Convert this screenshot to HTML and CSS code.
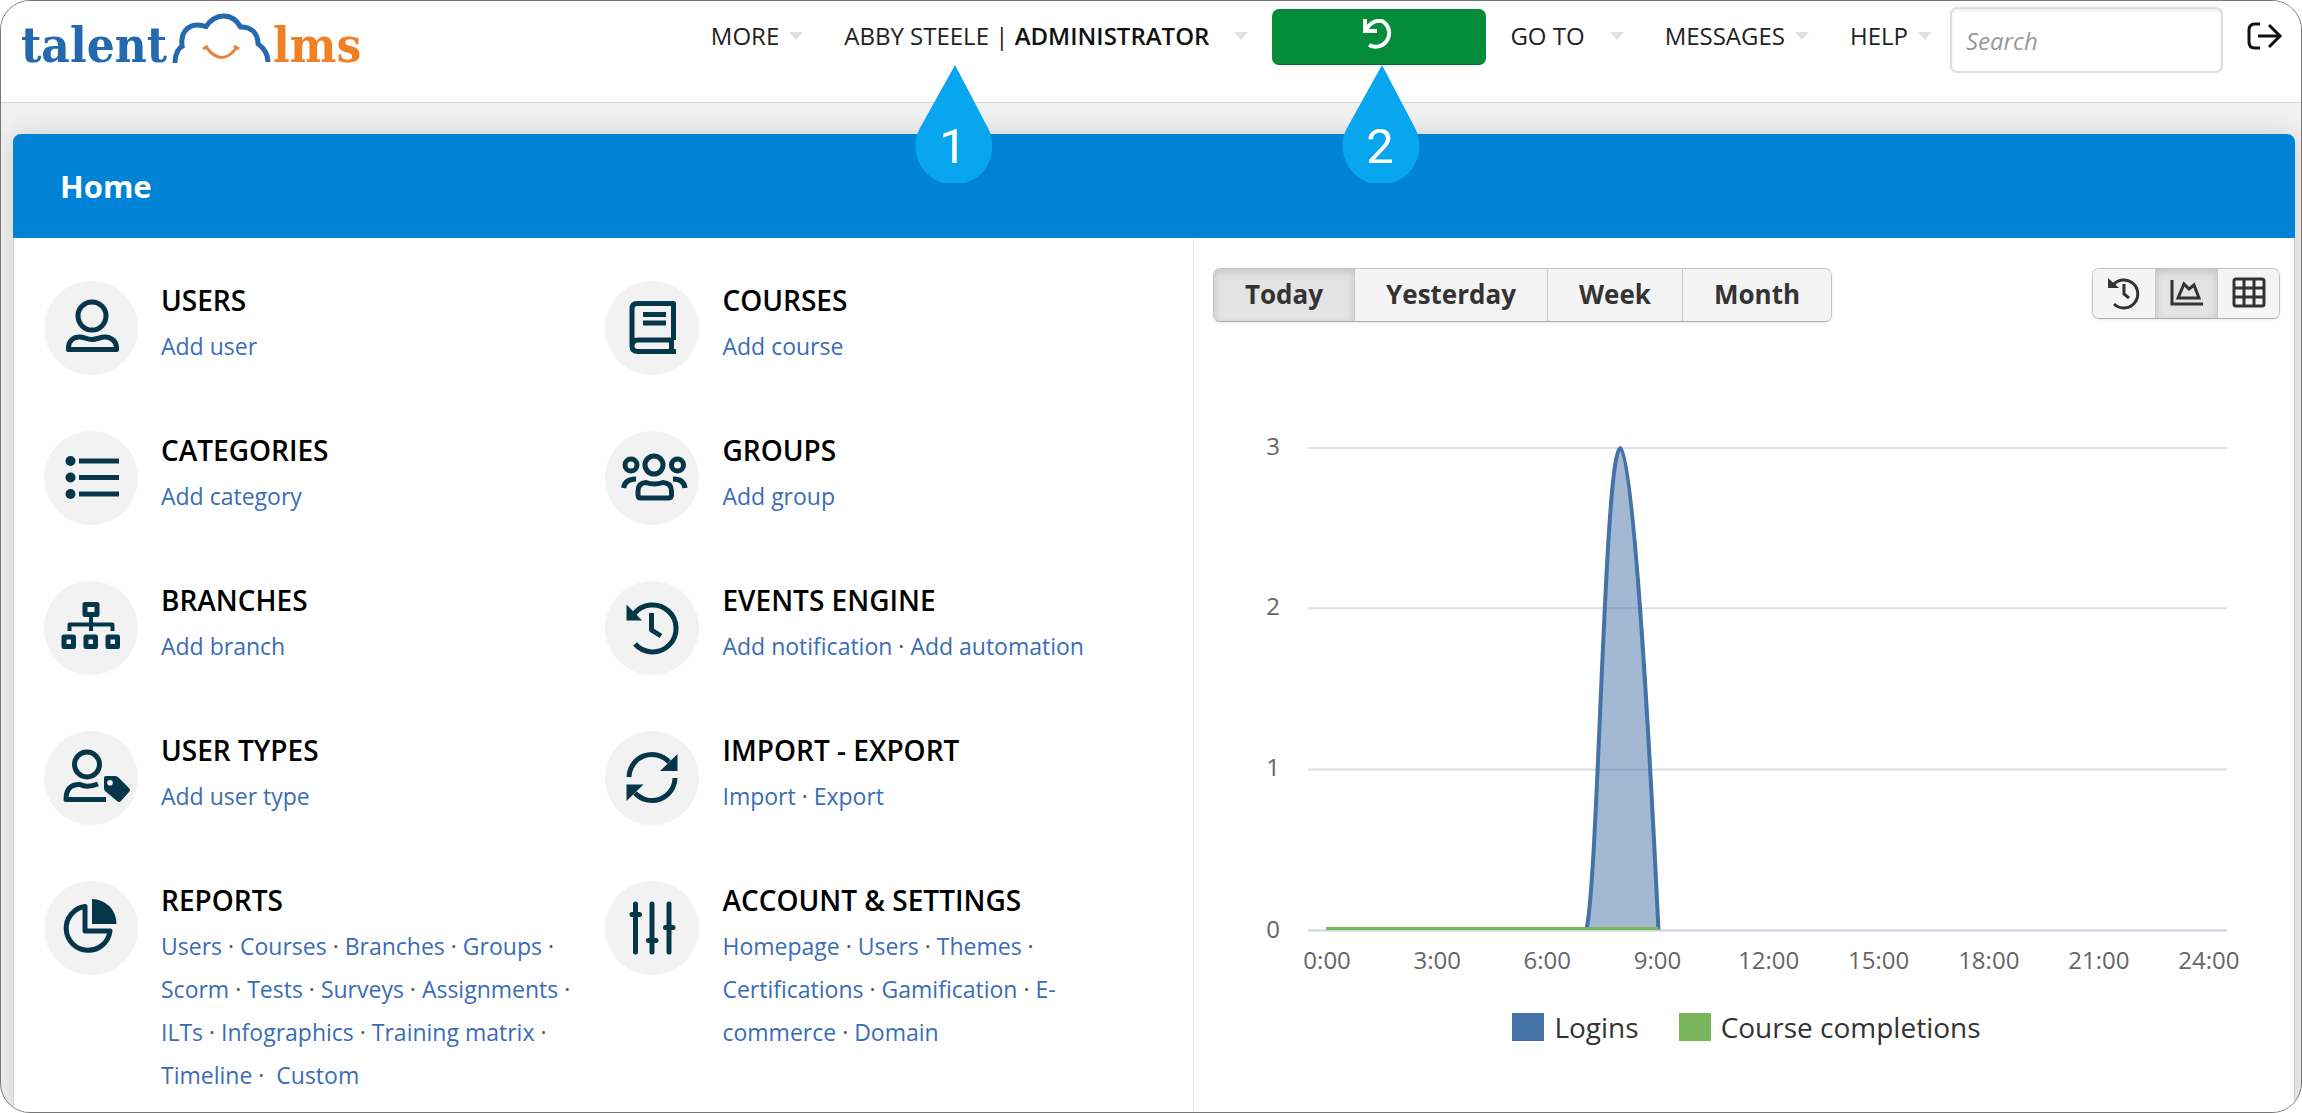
FILE: index.html
```html
<!DOCTYPE html>
<html lang="en">

<head>
    <meta charset="UTF-8">
    <meta name="viewport" content="width=device-width, initial-scale=1.0">
    <title>Home | TalentLMS</title>
    <link rel="stylesheet" href="styles.css">
</head>

<body>
    <div class="page">
        <header class="topbar">
            <a class="logo" href="#" aria-label="TalentLMS">
                <svg width="350" height="70" viewBox="0 0 350 70">
                    <text class="logo-talent" x="0" y="55">talent</text>
                    <text class="logo-lms" x="252" y="55">lms</text>
                    <g fill="none" stroke="#2468b0" stroke-width="5">
                        <path d="M154 56C154 47 157 41 163 38" />
                        <path d="M161 39C159 22 171 14 186 20" />
                        <path d="M184 21C194 5 212 5 220 21" />
                        <path d="M218 20C230 19 237 26 237 37" />
                        <path d="M236 36C243 41 247 47 247 55" />
                    </g>
                    <path d="M185 40Q201 61 216 40M182 42L187 39M213 39L218 42" fill="none" stroke="#e8833a" stroke-width="3" />
                </svg>
            </a>

            <nav class="nav">
                <a class="nav-item" href="#">MORE<span class="caret"></span></a>
                <a class="nav-item wide" href="#">
                    <span>ABBY STEELE | <b>ADMINISTRATOR</b></span><span class="caret"></span>
                    <span class="pin pin-user">
                        <svg width="77" height="118" viewBox="0 0 77 118">
                            <path d="M40 0L73 63A38.500 38.500 0 1 1 5 63Z" fill="#08a6ee" />
                            <text x="38" y="98">1</text>
                        </svg>
                    </span>
                </a>
            </nav>

            <button class="switch-back" type="button" aria-label="Switch back">
                <svg width="32" height="32" viewBox="0 0 32 32" fill="none" stroke="#fff" stroke-width="4">
                    <path d="M2 0V12H14M3 11C8 2 15 1 19 2A13.500 13.500 0 1 1 6 26" />
                </svg>
                <span class="pin">
                    <svg width="77" height="118" viewBox="0 0 77 118">
                        <path d="M40 0L73 63A38.500 38.500 0 1 1 5 63Z" fill="#08a6ee" />
                        <text x="38" y="98">2</text>
                    </svg>
                </span>
            </button>

            <nav class="nav">
                <a class="nav-item wide" href="#">GO TO<span class="caret"></span></a>
                <a class="nav-item" href="#">MESSAGES<span class="caret"></span></a>
                <a class="nav-item" href="#">HELP<span class="caret"></span></a>
            </nav>

            <input class="search" type="text" placeholder="Search" aria-label="Search">

            <a class="logout" href="#" aria-label="Log out">
                <svg width="36" height="28" viewBox="0 0 36 28" fill="none" stroke="#111" stroke-width="3">
                    <path d="M13 2H8Q2 2 2 8V20Q2 26 8 26H13M11 14H33M22 3L33 14L22 25" />
                </svg>
            </a>
        </header>

        <main class="card">
            <h1 class="card-title">Home</h1>

            <div class="card-body">
                <section class="tiles">
                    <div class="tile">
                        <svg class="tile-icon" viewBox="0 0 94 94">
                            <circle cx="48" cy="35" r="14" />
                            <path d="M24.500 68.500V66C25 60 29 56 35.500 56C40 56 43 58.500 48 58.500C53 58.500 56 56 61 56C67 56 72 60 72.500 66V68.500Z" />
                        </svg>
                        <div class="tile-text">
                            <h2>USERS</h2>
                            <p><a href="#">Add user</a></p>
                        </div>
                    </div>

                    <div class="tile">
                        <svg class="tile-icon" viewBox="0 0 94 94">
                            <path d="M68.500 59V22.500H32Q27 22.500 27 28V65M69 59H33Q27 59 27 65Q27 70.500 33 70.500H71M66.500 59V70M38 33.500H61M38 42H61" />
                        </svg>
                        <div class="tile-text">
                            <h2>COURSES</h2>
                            <p><a href="#">Add course</a></p>
                        </div>
                    </div>

                    <div class="tile">
                        <svg class="tile-icon" viewBox="0 0 94 94">
                            <path d="M35 30H75M35 46.500H75M35 63H75" />
                            <g class="solid">
                                <circle cx="26.500" cy="30" r="5" />
                                <circle cx="26.500" cy="46.500" r="5" />
                                <circle cx="26.500" cy="63" r="5" />
                            </g>
                        </svg>
                        <div class="tile-text">
                            <h2>CATEGORIES</h2>
                            <p><a href="#">Add category</a></p>
                        </div>
                    </div>

                    <div class="tile">
                        <svg class="tile-icon" viewBox="0 0 94 94">
                            <circle cx="49" cy="34" r="9" />
                            <circle cx="26" cy="34" r="6" />
                            <circle cx="72.500" cy="34" r="6" />
                            <path d="M33 64V60Q33 52 41 51.500Q49 54.500 58 51.500Q66.500 52 66.500 60V64Q66.500 67 63 67H36Q33 67 33 64ZM18.500 57Q20 48 31 48M80 57Q79 48 68 48" />
                        </svg>
                        <div class="tile-text">
                            <h2>GROUPS</h2>
                            <p><a href="#">Add group</a></p>
                        </div>
                    </div>

                    <div class="tile">
                        <svg class="tile-icon" viewBox="0 0 94 94">
                            <rect x="41" y="23.500" width="12" height="10" />
                            <rect x="20" y="56" width="9.500" height="9.500" />
                            <rect x="42" y="56" width="9.500" height="9.500" />
                            <rect x="64" y="56" width="9.500" height="9.500" />
                            <path class="thin" d="M47 34V50M25.500 50V43.500H68.500V50" />
                        </svg>
                        <div class="tile-text">
                            <h2>BRANCHES</h2>
                            <p><a href="#">Add branch</a></p>
                        </div>
                    </div>

                    <div class="tile">
                        <svg class="tile-icon" viewBox="0 0 94 94">
                            <path d="M29 33A23.500 23.500 0 1 1 30 63M46.500 32V49L56 55" />
                            <path class="solid" d="M21.500 23.500L37 39.500H21.500Z" />
                        </svg>
                        <div class="tile-text">
                            <h2>EVENTS ENGINE</h2>
                            <p><a href="#">Add notification</a> · <a href="#">Add automation</a></p>
                        </div>
                    </div>

                    <div class="tile">
                        <svg class="tile-icon" viewBox="0 0 94 94">
                            <circle cx="43" cy="33.500" r="12.500" />
                            <path d="M54 53Q43 57 36 53.500Q22 53 22 68.500H62" />
                            <path class="solid" fill-rule="evenodd" d="M60 47Q60 45 62 45H71Q73 45 75 47L85 57Q87 59 85 61L77 70Q75 72 73 70L61 60Q60 59 60 57ZM66 49A2.800 2.800 0 1 0 66 54.600A2.800 2.800 0 1 0 66 49Z" />
                        </svg>
                        <div class="tile-text">
                            <h2>USER TYPES</h2>
                            <p><a href="#">Add user type</a></p>
                        </div>
                    </div>

                    <div class="tile">
                        <svg class="tile-icon" viewBox="0 0 94 94">
                            <path d="M24 46A23 23 0 0 1 64 31M70 47A23 23 0 0 1 30 62" />
                            <path class="solid" d="M72.500 23V40H55ZM21.500 70V53.500H38.500Z" />
                        </svg>
                        <div class="tile-text">
                            <h2>IMPORT - EXPORT</h2>
                            <p><a href="#">Import</a> · <a href="#">Export</a></p>
                        </div>
                    </div>

                    <div class="tile">
                        <svg class="tile-icon" viewBox="0 0 94 94">
                            <path d="M41 25.500A22 22 0 1 0 66 50H41Z" />
                            <path class="solid" d="M48 18A24.500 24.500 0 0 1 72.500 43H48Z" />
                        </svg>
                        <div class="tile-text">
                            <h2>REPORTS</h2>
                            <p><a href="#">Users</a> · <a href="#">Courses</a> · <a href="#">Branches</a> · <a href="#">Groups</a> · <a href="#">Scorm</a> · <a href="#">Tests</a> · <a href="#">Surveys</a> · <a href="#">Assignments</a> · <a href="#">ILTs</a> · <a href="#">Infographics</a> · <a href="#">Training matrix</a> · <a href="#">Timeline</a> · &nbsp;<a href="#">Custom</a></p>
                        </div>
                    </div>

                    <div class="tile">
                        <svg class="tile-icon" viewBox="0 0 94 94">
                            <path d="M30.500 23V71M47 23V71M64 23V71M27 33.500H34.500M43.500 59.500H51M60.500 46.500H68" stroke-linecap="round" />
                        </svg>
                        <div class="tile-text">
                            <h2>ACCOUNT &amp; SETTINGS</h2>
                            <p><a href="#">Homepage</a> · <a href="#">Users</a> · <a href="#">Themes</a> · <a href="#">Certifications</a> · <a href="#">Gamification</a> · <a href="#">E-commerce</a> · <a href="#">Domain</a></p>
                        </div>
                    </div>
                </section>

                <section class="stats">
                    <div class="toolbar">
                        <div class="btn-group">
                            <button class="btn active" type="button">Today</button>
                            <button class="btn" type="button">Yesterday</button>
                            <button class="btn" type="button">Week</button>
                            <button class="btn" type="button">Month</button>
                        </div>
                        <div class="btn-group icons">
                            <button class="btn" type="button" aria-label="Timeline">
                                <svg width="34" height="34" viewBox="0 0 34 34">
                                    <path d="M6 9A14 14 0 1 1 7 28M17 8V18L22 22" />
                                    <path d="M1 2L12 12H1Z" fill="#333" stroke="none" />
                                </svg>
                            </button>
                            <button class="btn active" type="button" aria-label="Chart">
                                <svg width="34" height="34" viewBox="0 0 34 34">
                                    <path d="M2 4V28H33M8 22L14 8L19 13L24 9L29 22Z" />
                                </svg>
                            </button>
                            <button class="btn" type="button" aria-label="Table">
                                <svg width="34" height="34" viewBox="0 0 34 34">
                                    <rect x="2" y="3" width="30" height="27" rx="2" />
                                    <path d="M2 12H32M2 21H32M12 3V30M22 3V30" />
                                </svg>
                            </button>
                        </div>
                    </div>

                    <svg class="chart" viewBox="0 0 1066 660">
                        <g stroke="#dcdee0" stroke-width="2">
                            <path d="M95 126H1013" />
                            <path d="M95 286H1013" />
                            <path d="M95 447H1013" />
                            <path d="M95 608H1013" stroke="#c8d2e4" />
                        </g>
                        <path d="M373 607C385 560 391 126 407 126C420 126 437 440 445 607Z" fill="#4572a7" fill-opacity=".5" />
                        <path d="M373 607C385 560 391 126 407 126C420 126 437 440 445 607" fill="none" stroke="#4572a7" stroke-width="4" />
                        <path d="M113 606H445" stroke="#7ab55c" stroke-width="3" />
                        <g class="axis-y">
                            <text x="67" y="133">3</text>
                            <text x="67" y="293">2</text>
                            <text x="67" y="454">1</text>
                            <text x="67" y="615">0</text>
                        </g>
                        <g class="axis-x">
                            <text x="114" y="646">0:00</text>
                            <text x="224" y="646">3:00</text>
                            <text x="334" y="646">6:00</text>
                            <text x="444" y="646">9:00</text>
                            <text x="555" y="646">12:00</text>
                            <text x="665" y="646">15:00</text>
                            <text x="775" y="646">18:00</text>
                            <text x="885" y="646">21:00</text>
                            <text x="995" y="646">24:00</text>
                        </g>
                    </svg>

                    <ul class="legend">
                        <li class="logins">Logins</li>
                        <li class="completions">Course completions</li>
                    </ul>
                </section>
            </div>
        </main>
    </div>
</body>

</html>
```
FILE: styles.css
```css
* {
    box-sizing: border-box;
}

body {
    margin: 0;
    background-color: white;
    font-family: "Open Sans", "Noto Sans", sans-serif;
    font-size: 24px;
    color: #222;
}

a {
    color: #3a6db5;
    text-decoration: none;
}

button,
input {
    font-family: inherit;
    font-size: 24px;
}

.page {
    display: flex;
    flex-direction: column;
    min-height: 100vh;
    border: 1px solid #777;
    border-radius: 30px;
    background-color: #f1f1f1;
    overflow: hidden;
}

/* Top bar */
.topbar {
    display: flex;
    align-items: flex-start;
    height: 102px;
    padding: 6px 18px 0 20px;
    border-bottom: 1px solid #d0d4d4;
    background-color: white;
}

.logo {
    margin-right: auto;
}

.logo-talent,
.logo-lms {
    font-family: "DejaVu Serif Condensed", "DejaVu Serif", serif;
    font-weight: bold;
    font-size: 49px;
    fill: #2468b0;
}

.logo-lms {
    fill: #f08024;
}

.nav {
    display: flex;
    gap: 41px;
    line-height: 58px;
}

.nav-item {
    position: relative;
    display: flex;
    align-items: center;
    gap: 10px;
    color: #222;
    white-space: nowrap;
}

.nav-item.wide {
    gap: 25px;
}

.nav-item b {
    font-weight: 600;
    color: #111;
}

.caret {
    border: 7px solid transparent;
    border-top: 8px solid #dde2e5;
    border-bottom: none;
}

.switch-back {
    position: relative;
    width: 214px;
    height: 56px;
    margin: 2px 24px 0;
    padding: 0 0 6px;
    border: none;
    border-bottom: 1px solid #04702f;
    border-radius: 7px;
    background-color: #048c3a;
    cursor: pointer;
}

.switch-back svg {
    vertical-align: middle;
}

.pin {
    position: absolute;
    top: 56px;
    left: 50%;
    width: 77px;
    height: 118px;
    margin-left: -37px;
    line-height: 0;
    z-index: 1;
}

.pin-user {
    top: 58px;
    left: 108px;
}

.pin text {
    font-family: Roboto, sans-serif;
    font-size: 49px;
    text-anchor: middle;
    fill: white;
}

.search {
    width: 273px;
    height: 66px;
    margin-left: 18px;
    padding: 0 14px;
    border: 2px solid #dadedf;
    border-radius: 7px;
    box-shadow: inset 0 2px 3px rgba(0, 0, 0, 0.06);
}

.search::placeholder {
    font-style: italic;
    color: #999;
}

.logout {
    margin: 15px 0 0 24px;
    line-height: 0;
}

/* Dashboard card */
.card {
    display: flex;
    flex-direction: column;
    flex: 1;
    margin: 31px 6px 0 12px;
    border-radius: 8px 8px 0 0;
    background-color: white;
    box-shadow: 0 0 24px rgba(0, 0, 0, 0.15);
}

.card-title {
    margin: 0;
    padding: 0 47px;
    border-radius: 8px 8px 0 0;
    background-color: #0083d7;
    color: white;
    font-size: 31px;
    line-height: 104px;
}

.card-body {
    display: grid;
    grid-template-columns: 1181fr 1101fr;
    flex: 1;
    border: 1px solid #ccd4da;
    border-top: none;
    border-bottom: none;
}

/* Shortcut tiles */
.tiles {
    display: grid;
    grid-template-columns: 1fr 1fr;
    grid-auto-rows: minmax(150px, auto);
    align-content: start;
    padding: 43px 26px 0 30px;
    border-right: 1px solid #eceef0;
}

.tile {
    display: flex;
    gap: 23px;
}

.tile-icon {
    flex: none;
    width: 94px;
    height: 94px;
    border-radius: 50%;
    background-color: #f2f2f2;
    fill: none;
    stroke: #05364a;
    stroke-width: 5px;
    stroke-linejoin: round;
}

.tile-icon .solid {
    fill: #05364a;
    stroke: none;
}

.tile-icon .thin {
    stroke-width: 4px;
}

.tile-text {
    flex: 1;
    padding-right: 34px;
}

.tile-text h2 {
    margin: 0 0 6px;
    font-size: 28px;
    font-weight: 600;
    line-height: 38px;
    color: #000;
}

.tile-text p {
    margin: 0;
    font-size: 23px;
    line-height: 43px;
    color: #555;
}

/* Statistics */
.stats {
    padding: 30px 14px 0 19px;
}

.toolbar {
    display: flex;
    justify-content: space-between;
    align-items: flex-start;
}

.btn-group {
    display: flex;
    border: 1px solid #c4c4c4;
    border-bottom-color: #aaa;
    border-radius: 7px;
    box-shadow: 0 1px 2px rgba(0, 0, 0, 0.08);
    overflow: hidden;
}

.btn {
    height: 52px;
    padding: 0 31px 2px;
    border: none;
    border-left: 1px solid #c8c8c8;
    background-color: #f4f4f4;
    color: #333;
    font-size: 26px;
    font-weight: bold;
    cursor: pointer;
}

.btn:first-child {
    border-left: none;
}

.btn.active {
    background-color: #e4e4e4;
    box-shadow: inset 0 3px 8px rgba(0, 0, 0, 0.15);
}

.icons .btn {
    width: 62px;
    height: 49px;
    padding: 0 0 2px;
}

.icons svg {
    display: block;
    margin: 0 auto;
    fill: none;
    stroke: #333;
    stroke-width: 3px;
}

.chart {
    display: block;
    width: 100%;
}

.chart text {
    font-size: 24px;
    fill: #666;
}

.axis-y {
    text-anchor: end;
}

.axis-x {
    text-anchor: middle;
}

.legend {
    display: flex;
    justify-content: center;
    gap: 40px;
    margin: 25px 0 0;
    padding: 0;
    list-style: none;
    font-size: 28px;
    line-height: 38px;
    color: #333;
}

.legend li {
    display: flex;
    align-items: center;
    gap: 10px;
}

.legend li::before {
    content: "";
    width: 32px;
    height: 28px;
    background-color: #4572a7;
}

.legend .completions::before {
    background-color: #7ab55c;
}
```
